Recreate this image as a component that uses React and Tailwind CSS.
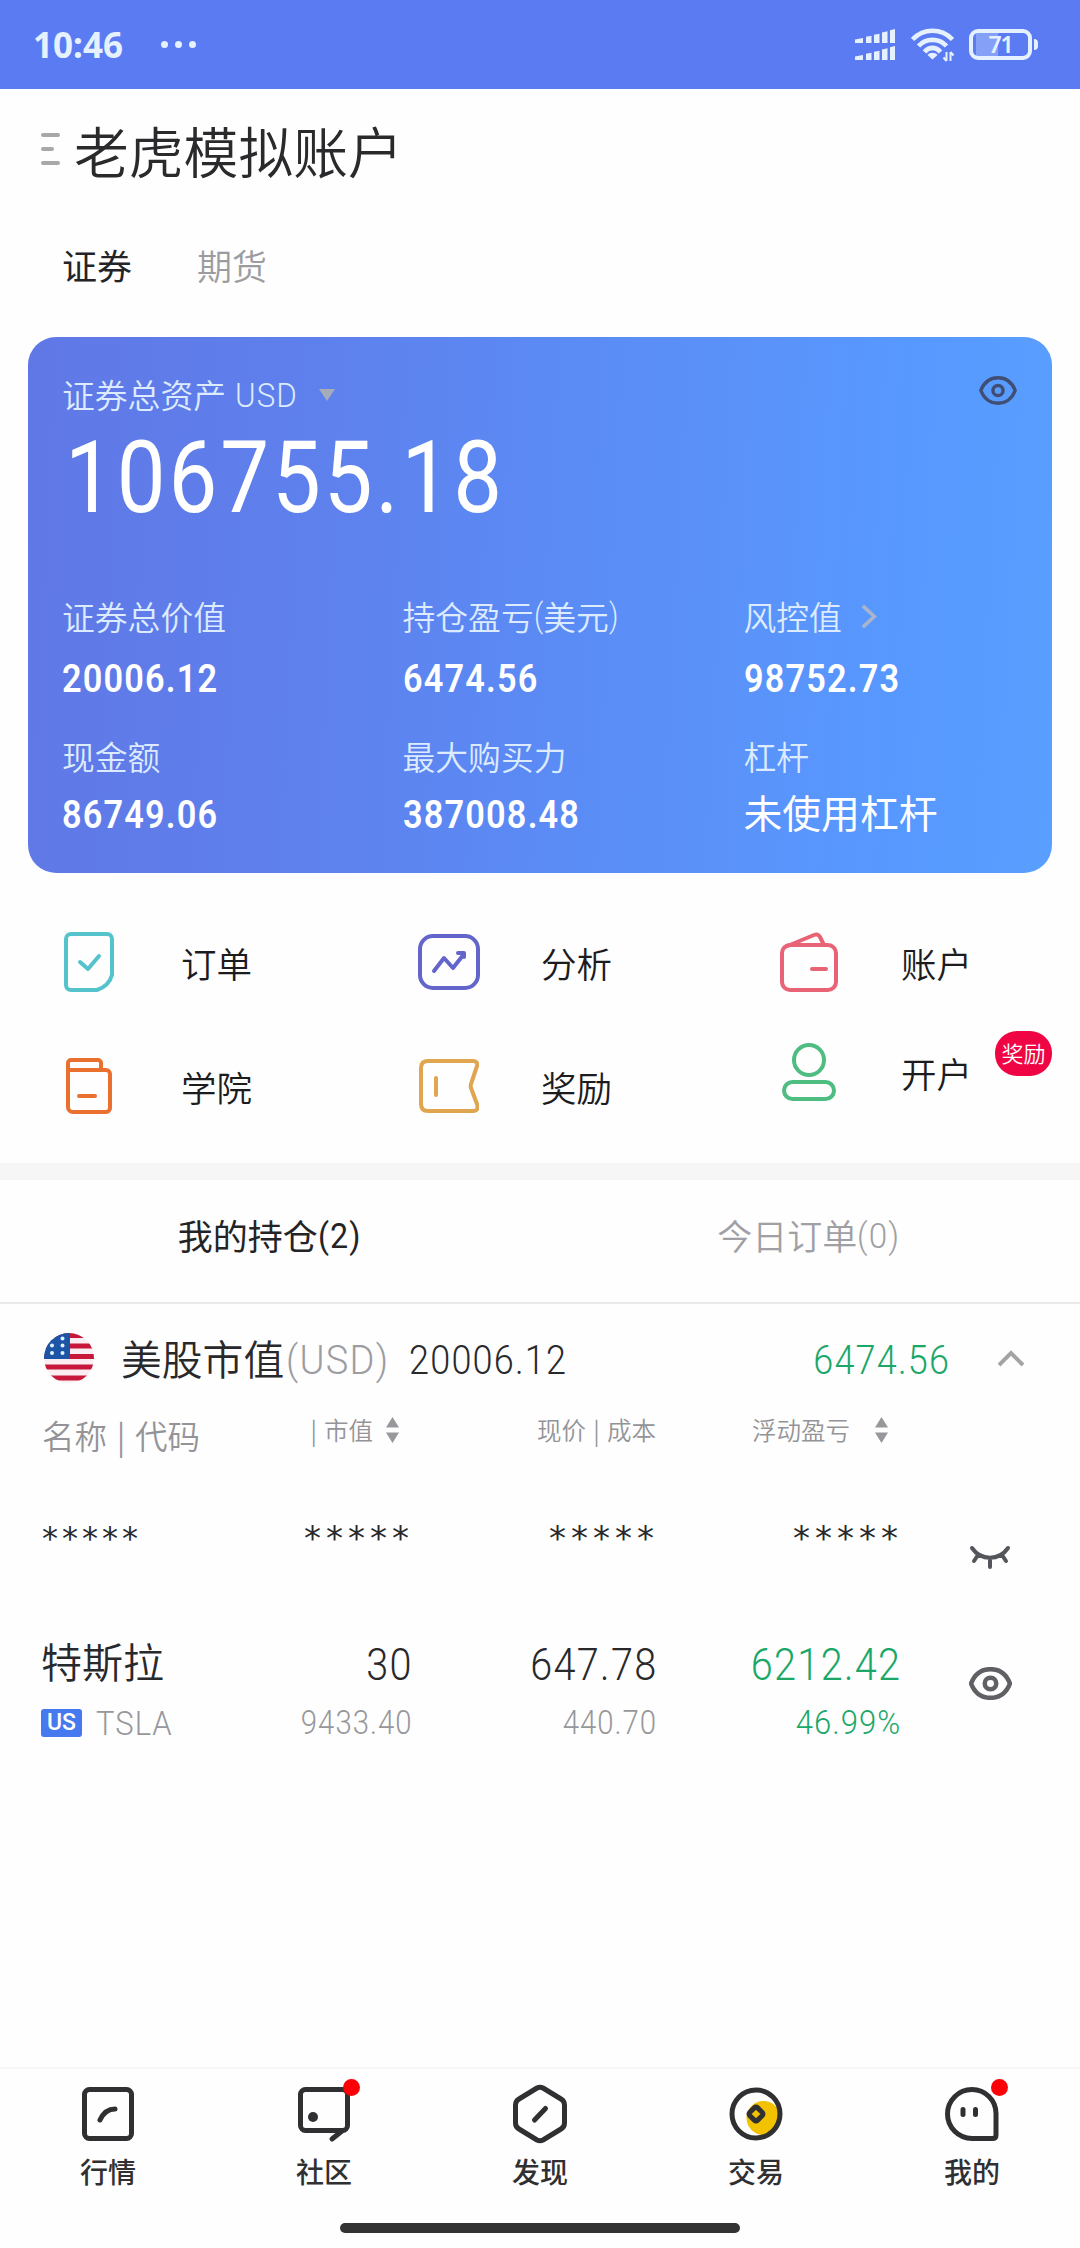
import React from "react";

const CJK = "font-['Noto_Sans_CJK_SC',sans-serif]";

// Figures are set slightly condensed, with open tracking.
function Num({ children, className = "", right = false, scale = "scale-x-[.88]" }) {
  return (
    <span
      className={`inline-block whitespace-nowrap font-['Roboto',sans-serif] tracking-[.034em] ${scale} ${
        right ? "origin-right -mr-[.034em]" : "origin-left"
      } ${className}`}
    >
      {children}
    </span>
  );
}

function StatusBar() {
  return (
    <header className="flex h-[89px] shrink-0 items-center bg-[#5b7bf3] pl-[33px] pr-[42px] text-[#e6f1ff]">
      <span className="font-['Noto_Sans',sans-serif] text-[35px] font-bold leading-[40px]">10:46</span>
      <div className="ml-[38px] flex gap-[7px]">
        <i className="size-[7px] rounded-full bg-current" />
        <i className="size-[7px] rounded-full bg-current" />
        <i className="size-[7px] rounded-full bg-current" />
      </div>
      <div className="ml-auto flex items-center">
        <svg width="40" height="32" viewBox="0 0 40 32" fill="currentColor">
          <path d="M0 10.5 8 9v5H0zM11 7.8l5.500-1V14H11zM19 5.8l5.500-1V14H19zM27 3.4l5.500-1.2V14H27zM35 1.2 40 0v14h-5z" />
          <path d="M0 27.500 8 26v5H0zM11 24.800l5.500-1V31H11zM19 22.800l5.500-1V31H19zM27 20.400l5.500-1.200V31H27zM35 18.200l5-1.200v14h-5z" />
        </svg>
        <svg className="ml-[16px]" width="44" height="34" viewBox="0 0 44 34" fill="none" stroke="currentColor" strokeWidth="4.6">
          <path d="M1.5 11.5C12.500-.1 30.500-.1 41.500 11.500" />
          <path d="M7.500 18C15 9.800 28 9.800 35.500 18" />
          <path d="M13.500 24C18 18.500 25 18.500 29.500 24" />
          <path d="M21.500 31.500 16.500 27c2.500-3 7.500-3 10 0z" fill="currentColor" stroke="none" />
          <path d="M35.500 24v9M35.500 33l-3-3.500M39.500 33v-9M39.500 24l3 3.500" strokeWidth="2" />
        </svg>
        <div className="ml-[14px] flex h-[31px] w-[63px] items-center justify-center rounded-[9px] border-4 border-current bg-[linear-gradient(90deg,#5b7bf3_6%,#84a1f7_6%,#84a1f7_46%,#5b7bf3_46%)]">
          <span className="font-['Noto_Sans',sans-serif] text-[23px] font-semibold leading-none tracking-tighter">71</span>
        </div>
        <i className="ml-[2px] h-[11px] w-[4px] rounded-r bg-current" />
      </div>
    </header>
  );
}

function Eye({ className, sw, ...rest }) {
  return (
    <svg className={className} viewBox="0 0 42 32" fill="none" stroke="currentColor" strokeWidth={sw} {...rest}>
      <path d="M2 16C5.500 7 12.500 2 21 2s15.500 5 19 14C36.500 25 29.500 30 21 30S5.500 25 2 16Z" strokeLinejoin="round" />
      <circle cx="21" cy="16" r="5.600" />
    </svg>
  );
}

function Stat({ label, value, chevron, text }) {
  return (
    <div>
      <div className="flex h-[40px] items-center text-[32.800px] font-[350] leading-[40px] text-[#dcebff]">
        {label}
        {chevron && (
          <svg className="ml-[19px]" width="16" height="27" viewBox="0 0 18 28" fill="none" stroke="#a9b4cd" strokeWidth="4">
            <path d="m2 2 13 12L2 26" />
          </svg>
        )}
      </div>
      {text ? (
        <div className="stat-value h-[40px] text-[38.800px] leading-[35px]">{text}</div>
      ) : (
        <div className="stat-value h-[40px] leading-[42px]">
          <Num className="text-[39px] font-semibold">{value}</Num>
        </div>
      )}
    </div>
  );
}

function AssetCard() {
  return (
    <section className="relative mx-[28px] mt-[47px] h-[536px] shrink-0 rounded-[28px] bg-[linear-gradient(93deg,#6078e6_0%,#5e81ed_30%,#5b8bf5_52%,#5a93fa_70%,#5798ff_84%,#599fff_100%)] pl-[34px] pt-[37px] text-white">
      <div className="flex h-[40px] items-center text-[32.800px] font-[350] leading-[40px] text-[#dcebff]">
        证券总资产
        <Num scale="scale-x-[.92]" className="ml-[9px] mt-[2px] text-[34px] font-[350]">USD</Num>
        <svg className="ml-[16px] mt-[2px]" width="16" height="12" viewBox="0 0 16 12">
          <path d="M0 0h16L8 12z" fill="#a6abb9" />
        </svg>
      </div>
      <div className="mt-[14px] h-[100px] leading-[100px]">
        <Num scale="scale-x-[.86]" className="ml-[3px] text-[101px]">106755.18</Num>
      </div>
      <div className="mt-[68px] grid grid-cols-[340.500px_341px_1fr] [&_.stat-value]:mt-[22px]">
        <Stat label="证券总价值" value="20006.12" />
        <Stat label={<span className="flex">持仓盈亏<Num className="-mr-[2px]">(</Num>美元<Num>)</Num></span>} value="6474.56" />
        <Stat label="风控值" value="98752.73" chevron />
      </div>
      <div className="mt-[38px] grid grid-cols-[340.500px_341px_1fr] [&_.stat-value]:mt-[18px]">
        <Stat label="现金额" value="86749.06" />
        <Stat label="最大购买力" value="387008.48" />
        <Stat label="杠杆" text="未使用杠杆" />
      </div>
      <Eye className="absolute right-[35px] top-[39px] h-[29px] w-[38px] text-[#414e73]" sw="3.800" />
    </section>
  );
}

const iconProps = { fill: "none", strokeLinecap: "round", strokeLinejoin: "round", strokeWidth: 4 };

const services = [
  {
    name: "订单",
    icon: (
      <svg width="50" height="60" viewBox="0 0 50 60" stroke="#55c3cb" {...iconProps}>
        <path d="M7 2h36a5 5 0 0 1 5 5v36Q45 54 33 58H7a5 5 0 0 1-5-5V7a5 5 0 0 1 5-5Z" />
        <path d="m16 30 8 7 11-13" />
      </svg>
    ),
  },
  {
    name: "分析",
    icon: (
      <svg width="62" height="56" viewBox="0 0 62 56" stroke="#6465cb" {...iconProps}>
        <rect x="2" y="2" width="58" height="52" rx="13" />
        <path d="m16 37 10-13 9 10 11-14M40 19h6l0 4" />
      </svg>
    ),
  },
  {
    name: "账户",
    icon: (
      <svg width="58" height="60" viewBox="0 0 58 60" stroke="#e96377" {...iconProps}>
        <rect x="2" y="13" width="54" height="45" rx="8" />
        <path d="M5 15 34 3q4-1.500 6 2l4 8M32 37h14" />
      </svg>
    ),
  },
  {
    name: "学院",
    icon: (
      <svg width="46" height="56" viewBox="0 0 46 56" stroke="#ea7030" {...iconProps}>
        <path d="M3 12h37a4 4 0 0 1 4 4v34a4 4 0 0 1-4 4H7a5 5 0 0 1-5-5V5a3 3 0 0 1 3-3h27a3 3 0 0 1 3 3v7M13 38h16" />
      </svg>
    ),
  },
  {
    name: "奖励",
    icon: (
      <svg width="60" height="54" viewBox="0 0 60 54" stroke="#dfa54f" {...iconProps}>
        <path d="M9 2h45q5 0 4 5l-6 18q-.6 2 0 4l6 16q2 7-4 7H9q-7 0-7-7V9q0-7 7-7ZM17 19v17" />
      </svg>
    ),
  },
  {
    name: "开户",
    badge: "奖励",
    icon: (
      <svg width="54" height="58" viewBox="0 0 54 58" stroke="#4fbd82" {...iconProps}>
        <circle cx="27" cy="17" r="15" />
        <rect x="2" y="39" width="50" height="17" rx="8.500" />
      </svg>
    ),
  },
];

function Services() {
  return (
    <section className="mt-[28px] grid shrink-0 grid-cols-3 text-[35.500px] font-[350] leading-[40px] text-[#1c1c1e]">
      {services.map((s) => (
        <div key={s.name} className={`relative flex h-[124px] items-center ${s.badge ? "pb-[28px]" : ""}`}>
          <div className="flex w-[181px] justify-center pb-[2px] pr-[3px]">{s.icon}</div>
          <span>{s.name}</span>
          {s.badge && (
            <span className="absolute right-[28px] top-[6px] h-[45px] w-[57px] rounded-[22px] bg-[#f00544] text-center text-[22px] leading-[43px] text-white">
              {s.badge}
            </span>
          )}
        </div>
      ))}
    </section>
  );
}

function Flag() {
  return (
    <svg width="50" height="50" viewBox="0 0 50 50">
      <clipPath id="round"><circle cx="25" cy="25" r="25" /></clipPath>
      <g clipPath="url(#round)">
        <rect width="50" height="50" fill="#fbeef2" />
        <path d="M0 2.500h50M0 13h50M0 23.500h50M0 34h50M0 45h50" stroke="#c7183c" strokeWidth="5.200" />
        <rect width="26" height="26" fill="#1d55a6" />
        <g fill="#dff1fb">
          <circle cx="18.500" cy="5.500" r="2" />
          <circle cx="8" cy="12.500" r="2" />
          <circle cx="18.500" cy="12.500" r="2" />
          <circle cx="8" cy="20" r="2" />
          <circle cx="18.500" cy="20" r="2" />
        </g>
      </g>
    </svg>
  );
}

function Sort({ className }) {
  return (
    <svg className={className} width="13" height="26" viewBox="0 0 13 26" fill="#98989c">
      <path d="M6.500 0 13 10.500H0zM0 15.500h13L6.500 26z" />
    </svg>
  );
}

function Stars({ small }) {
  return (
    <span className={`font-['DejaVu_Sans',sans-serif] ${small ? "text-[32px] tracking-[4px]" : "-mr-[3px] text-[34px] tracking-[5px]"}`}>
      *****
    </span>
  );
}

const cols = "grid shrink-0 grid-cols-[180px_189px_245px_244px_1fr] pl-[42px]";

function Holdings() {
  return (
    <>
      <div className="flex h-[108px] shrink-0 items-center pl-[44px] text-[#29292c]">
        <Flag />
        <span className="ml-[27px] text-[40.800px] font-[350] leading-[50px]">美股市值</span>
        <Num scale="scale-x-[.95]" className="ml-[2px] mt-[5px] w-[123px] text-[40px] font-light text-[#9c9ca2]">(USD)</Num>
        <Num scale="scale-x-[.9]" className="mt-[5px] text-[40px] font-[350]">20006.12</Num>
        <Num right scale="scale-x-[.9]" className="ml-auto mt-[5px] text-[40px] font-[350] text-[#1aa768]">6474.56</Num>
        <svg className="ml-[49px] mr-[56px]" width="26" height="17" viewBox="0 0 26 17" fill="none" stroke="#a3a3a5" strokeWidth="4">
          <path d="M1 15 13 3l12 12" />
        </svg>
      </div>
      <div className={`${cols} -mt-[2px] text-[24.500px] font-[350] leading-[38px] text-[#949498]`}>
        <div className="flex whitespace-nowrap pt-[6px] text-[32.500px]">
          名称<span className="w-[28px] text-center">|</span>代码
        </div>
        <div className="flex h-[40px] items-center justify-end pr-[12px]">
          <span className="mr-[7px]">|</span>市值<Sort className="ml-[13px]" />
        </div>
        <div className="flex h-[40px] items-center justify-end">
          现价<span className="w-[21px] text-center">|</span>成本
        </div>
        <div className="flex h-[40px] items-center justify-end pr-[12px]">
          浮动盈亏<Sort className="ml-[25px]" />
        </div>
      </div>
      <div className={`${cols} mt-[60px] h-[50px] leading-[49px] text-[#29292c]`}>
        <div><Stars small /></div>
        <div className="text-right"><Stars /></div>
        <div className="text-right"><Stars /></div>
        <div className="text-right"><Stars /></div>
        <div className="flex justify-center pt-[31px]">
          <svg className="shrink-0" width="42" height="24" viewBox="0 0 42 24" fill="none" stroke="#55555c" strokeWidth="4" strokeLinecap="round">
            <path d="M3 3c9 13 27 13 36 0M9 10l-4 6M21 13v9M33 10l4 6" />
          </svg>
        </div>
      </div>
      <div className={`${cols} mt-[78px] leading-[46px] text-[#29292c]`}>
        <div>
          <div className="-ml-[1px] -mt-[5px] text-[41px] font-[350]">特斯拉</div>
          <div className="-ml-[1px] mt-[20px] flex h-[40px] items-center">
            <span className="flex h-[28px] w-[41px] items-center justify-center rounded-[3px] bg-[#4679ef] font-['Roboto',sans-serif] text-[23px] font-medium text-white">US</span>
            <Num scale="scale-x-[.91]" className="ml-[14px] text-[34px] font-light text-[#97979b]">TSLA</Num>
          </div>
        </div>
        {[
          ["30", "9433.40"],
          ["647.78", "440.70"],
          ["6212.42", "46.99%"],
        ].map(([a, b], i) => (
          <div key={a} className={`flex flex-col items-end ${i === 2 ? "text-[#1aa768]" : ""}`}>
            <Num right scale="scale-x-[.9]" className="text-[44px] font-[350]">{a}</Num>
            <Num
              right
              scale={i === 2 ? "scale-x-[.94]" : "scale-x-[.89]"}
              className={`mt-[15px] text-[33px] leading-[40px] ${i === 2 ? "font-[350]" : "font-light text-[#97979b]"}`}
            >
              {b}
            </Num>
          </div>
        ))}
        <div className="flex justify-center pt-[25px]">
          <Eye className="h-[33px] w-[43px] text-[#5f5f64]" sw="4.400" />
        </div>
      </div>
    </>
  );
}

const nav = [
  {
    name: "行情",
    icon: (
      <>
        <rect x="5.500" y="5.500" width="47" height="49" rx="5" />
        <path d="M21 36q5-11 15-11" />
      </>
    ),
  },
  {
    name: "社区",
    dot: true,
    icon: (
      <>
        <rect x="5.500" y="5.500" width="47" height="41" rx="5" />
        <path d="m47 47-10 8" />
        <circle cx="18" cy="33" r="5" fill="currentColor" stroke="none" />
      </>
    ),
  },
  {
    name: "发现",
    icon: (
      <>
        <path d="M26 4q3-1.600 6 0l18 11q3.500 2 3.500 6v18q0 4-3.500 6L32 56q-3 1.600-6 0L8 45q-3.500-2-3.500-6V21q0-4 3.500-6Z" />
        <path d="m23.500 36 11-11.500" />
      </>
    ),
  },
  {
    name: "交易",
    icon: (
      <>
        <circle cx="36.500" cy="34" r="17" fill="#f2c100" stroke="none" />
        <circle cx="29" cy="30" r="24" />
        <rect x="23.500" y="24.500" width="11" height="11" rx="2" transform="rotate(45 29 30)" />
      </>
    ),
  },
  {
    name: "我的",
    dot: true,
    icon: (
      <>
        <path d="M29 5.500a24 24 0 0 1 24 24V51q0 3.500-3.500 3.500H29a24.500 24.500 0 0 1 0-49Z" />
        <path d="M20 25.500v5M32.500 25.500v5" />
      </>
    ),
  },
];

function BottomNav() {
  return (
    <nav className="mt-auto h-[181px] shrink-0 border-t-2 border-[#f6f6f6] text-[#303033]">
      <div className="grid grid-cols-5">
        {nav.map((n) => (
          <div key={n.name} className="flex flex-col items-center pt-[15px]">
            <div className="relative">
              <svg width="58" height="60" viewBox="0 0 58 60" fill="none" stroke="currentColor" strokeWidth="5" strokeLinecap="round" strokeLinejoin="round">
                {n.icon}
              </svg>
              {n.dot && <i className="absolute -right-[7px] -top-[5px] size-[17px] rounded-full bg-[#fb0007]" />}
            </div>
            <span className="mt-[9px] text-[28px] font-medium leading-[36px]">{n.name}</span>
          </div>
        ))}
      </div>
      <div className="mx-auto mt-[34px] h-[10px] w-[400px] rounded-full bg-[#333]" />
    </nav>
  );
}

export default function App() {
  return (
    <div lang="zh-CN" className={`flex h-[2248px] w-[1080px] flex-col overflow-hidden bg-[#fefefe] ${CJK}`}>
      <StatusBar />
      <div className="mt-[29px] flex h-[60px] shrink-0 items-center pl-[41px] text-[#2a2a2d]">
        <div className="flex flex-col gap-[10px] pt-[2px]">
          <i className="h-[4px] w-[19px] rounded-full bg-[#a8a8a8]" />
          <i className="h-[4px] w-[13px] rounded-full bg-[#a8a8a8]" />
          <i className="h-[4px] w-[19px] rounded-full bg-[#a8a8a8]" />
        </div>
        <h1 className="ml-[14px] mt-px text-[54.800px] font-[350] leading-[60px]">老虎模拟账户</h1>
      </div>
      <div className="mt-[62px] flex h-[50px] shrink-0 gap-[65px] pl-[62px] text-[35px] leading-[50px]">
        <span className="text-[#242428]">证券</span>
        <span className="font-[350] text-[#9c9ca0]">期货</span>
      </div>
      <AssetCard />
      <Services />
      <div className="mt-[14px] h-[17px] shrink-0 bg-[#f6f6f6]" />
      <div className="grid h-[124px] shrink-0 grid-cols-2 border-b-2 border-[#e9e9ea] pb-[12px] text-[35px]">
        <div className="flex items-center justify-center text-[#242426]">
          我的持仓<Num scale="scale-x-[.92]" className="-mr-[3px] mt-[4px]">(2)</Num>
        </div>
        <div className="flex items-center justify-center font-[350] text-[#a0a0a4]">
          今日订单<Num scale="scale-x-[.95]" className="mt-[4px]">(0)</Num>
        </div>
      </div>
      <Holdings />
      <BottomNav />
    </div>
  );
}
